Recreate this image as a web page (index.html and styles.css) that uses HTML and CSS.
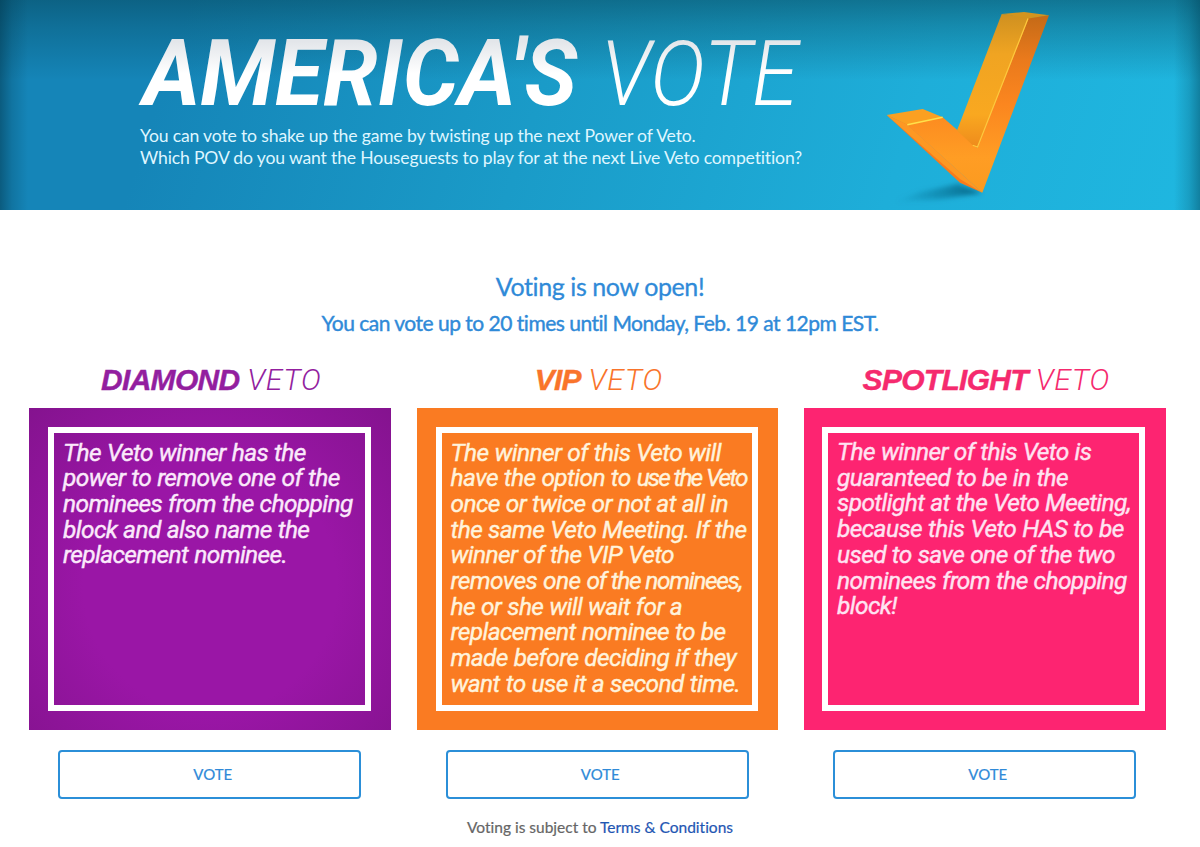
FILE: index.html
```
<!DOCTYPE html>
<html lang="en">

<head>
	<meta charset="UTF-8">
	<title>America's Vote</title>
	<link rel="stylesheet" href="styles.css">
</head>

<body>

	<header class="banner">
		<div class="banner-text">
			<svg class="banner-title" width="670" height="75" viewBox="0 0 670 75" role="heading" aria-level="1">
				<defs>
					<linearGradient id="titleFill" x1="0" y1="0" x2="0" y2="1">
						<stop offset="0.2" stop-color="#e3e6ea"/>
						<stop offset="0.5" stop-color="#ffffff"/>
					</linearGradient>
				</defs>
				<text class="title-bold" x="3" y="70" textLength="434" lengthAdjust="spacingAndGlyphs">AMERICA'S</text>
				<text class="title-thin" x="461" y="70" textLength="197" lengthAdjust="spacingAndGlyphs">VOTE</text>
			</svg>
			<p class="banner-copy">You can vote to shake up the game by twisting up the next Power of Veto.<br>
			Which POV do you want the Houseguests to play for at the next Live Veto competition?</p>
		</div>

		<svg class="check" width="180" height="210" viewBox="0 0 180 210">
			<defs>
				<linearGradient id="inner" x1="0" y1="0" x2="0" y2="1">
					<stop offset="0" stop-color="#cf9020"/>
					<stop offset="0.3" stop-color="#f0a422"/>
					<stop offset="0.75" stop-color="#f9a820"/>
					<stop offset="1" stop-color="#ee8a1c"/>
				</linearGradient>
				<linearGradient id="face" x1="0" y1="0" x2="0" y2="1">
					<stop offset="0" stop-color="#c46a17"/>
					<stop offset="0.25" stop-color="#ea7a1c"/>
					<stop offset="0.5" stop-color="#fb861f"/>
					<stop offset="0.8" stop-color="#ff9d24"/>
					<stop offset="1" stop-color="#fb9a1f"/>
				</linearGradient>
				<linearGradient id="ground" x1="0" y1="0" x2="1" y2="0">
					<stop offset="0" stop-color="#0b6f93" stop-opacity="0"/>
					<stop offset="1" stop-color="#07506e" stop-opacity="0.8"/>
				</linearGradient>
				<filter id="soft" x="-20%" y="-40%" width="140%" height="180%">
					<feGaussianBlur stdDeviation="2.5"/>
				</filter>
			</defs>
			<!-- shadow on the floor -->
			<path d="M14 202 L40 192 L78 184 L102 193 L60 199 Z" fill="url(#ground)" filter="url(#soft)"/>
			<!-- body -->
			<path d="M6.7 115 L27 124 L102.3 192.7 L80 182.7 Z" fill="#f87b1c"/>
			<path d="M148.3 18 L169 15.3 L102.3 192.7 L27 124.5 L62.7 117.3 L77.3 130 L97.3 147.7 Z" fill="url(#face)"/>
			<path d="M121.7 14 L149 17.5 L97.3 147.7 L92.7 145.3 L77 130.5 Z" fill="url(#inner)"/>
			<path d="M6.7 115 L42.7 109 L62.7 117.3 L27.3 124.7 Z" fill="#fba021"/>
			<path d="M121.7 14 L144 12 L169 15.3 L148.5 18.5 Z" fill="#d2941f"/>
			<path d="M6.7 115 L27.3 124.7 L102.3 192.7 L80 179 Z" fill="#ffa126" opacity="0.75"/>
			<!-- lit edges -->
			<path d="M27.3 124.7 L62.7 117.3" stroke="#ffe04a" stroke-width="1.6" fill="none"/>
			<path d="M148 18.5 L97.5 147 L92.7 145.3" stroke="#ffc83c" stroke-width="1.2" fill="none"/>
		</svg>
	</header>

	<main class="content">
		<h2 class="open">Voting is now open!</h2>
		<p class="until">You can vote up to 20 times until Monday, Feb. 19 at 12pm EST.</p>

		<div class="vetoes">
			<section class="veto diamond">
				<h3><b>DIAMOND</b> <i>VETO</i></h3>
				<div class="card">
					<p class="frame">The Veto winner has the<br>
					power to remove one of the<br>
					nominees from the chopping<br>
					block and also name the<br>
					replacement nominee.</p>
				</div>
				<button type="button" class="btn">VOTE</button>
			</section>

			<section class="veto vip">
				<h3><b>VIP</b> <i>VETO</i></h3>
				<div class="card">
					<p class="frame">The winner of this Veto will<br>
					have the option to <span class="tighter">use the Veto</span><br>
					once or twice or not at all in<br>
					the same Veto Meeting. If the<br>
					winner of the VIP Veto<br>
					removes one <span class="tight">of the nominees,</span><br>
					he or she will wait for a<br>
					replacement nominee to be<br>
					made before deciding if they<br>
					want to use it a second time.</p>
				</div>
				<button type="button" class="btn">VOTE</button>
			</section>

			<section class="veto spotlight">
				<h3><b>SPOTLIGHT</b> <i>VETO</i></h3>
				<div class="card">
					<p class="frame">The winner of this Veto is<br>
					guaranteed to be in the<br>
					spotlight at the Veto Meeting,<br>
					because this Veto HAS to be<br>
					used to save one of the two<br>
					nominees from the chopping<br>
					block!</p>
				</div>
				<button type="button" class="btn">VOTE</button>
			</section>
		</div>

		<p class="terms">Voting is subject to <a href="#">Terms &amp; Conditions</a></p>
	</main>

</body>

</html>
```
FILE: styles.css
```
* { box-sizing: border-box; }

body {
	margin: 0;
	background-color: #fff;
	font-family: Lato, "Liberation Sans", sans-serif;
	font-variant-ligatures: none;
}

h2, h3, p { margin: 0; font-weight: normal; }

/* banner */
.banner {
	display: flex;
	height: 210px;
	padding-left: 140px;
	background:
		linear-gradient(to right, rgba(0,50,70,0.5), rgba(0,50,70,0.2) 12px, rgba(0,50,70,0) 28px),
		linear-gradient(to left, rgba(0,60,80,0.45), rgba(0,60,80,0.2) 11px, rgba(0,60,80,0) 26px),
		linear-gradient(to bottom, rgba(5,70,90,0.55), rgba(5,70,90,0.35) 25px, rgba(5,70,90,0) 80px),
		linear-gradient(108deg, #1585b8 15%, #1a9bc8 45%, #1eaed9 75%, #1fb7e0);
}

.banner-text { width: 740px; padding-top: 35px; }

.banner-title { display: block; overflow: visible; }
.banner-title text {
	font-family: Roboto, sans-serif;
	font-size: 91.5px;
	font-style: italic;
	fill: url(#titleFill);
}
.banner-title .title-bold { font-weight: 700; }
.banner-title .title-thin { font-weight: 300; }

.banner-copy {
	margin-top: 15px;
	color: #dff6ff;
	font-size: 17.6px;
	letter-spacing: -0.16px;
	line-height: 21.5px;
	white-space: nowrap;
}

.check { flex: none; }

/* voting */
.content { padding: 60px 34px 0 29px; text-align: center; color: #2f8ad8; }

.open {
	padding-left: 5px;
	font-size: 25px;
	line-height: 32px;
	letter-spacing: -0.4px;
	-webkit-text-stroke: 0.3px;
}

.until {
	padding-left: 5px;
	margin-top: 7px;
	font-size: 21px;
	line-height: 28px;
	letter-spacing: -0.5px;
	-webkit-text-stroke: 0.4px;
}

.vetoes {
	display: grid;
	grid-template-columns: repeat(3, 361.5px);
	column-gap: 26px;
	margin-top: 23px;
}

.veto h3 {
	height: 48px;
	padding-left: 3px;
	line-height: 36px;
	font-size: 30px;
	white-space: nowrap;
}
.veto b {
	font-family: "Liberation Sans", Arial, sans-serif;
	font-style: italic;
	letter-spacing: -0.7px;
	-webkit-text-stroke: 0.4px;
}
.veto i {
	font-family: Roboto, sans-serif;
	font-weight: 300;
	letter-spacing: 0.7px;
}

.card {
	height: 321.5px;
	padding: 19px 20px 19px 19px;
}
.frame {
	height: 283.5px;
	border: 6px solid #fff;
	padding: 6.5px 0 0 9px;
	color: #fbe9fb;
	font-family: Roboto, sans-serif;
	font-style: italic;
	font-size: 24.5px;
	line-height: 25.7px;
	letter-spacing: -0.6px;
	word-spacing: 0.5px;
	text-align: left;
	white-space: nowrap;
	-webkit-text-stroke: 0.4px;
}
.tight { letter-spacing: -1.35px; }
.tighter { letter-spacing: -1.9px; }

.diamond h3 { color: #931f9f; }
.diamond .card { background: radial-gradient(circle at 50% 55%, #9a16a6 50%, #7f1289 112%); }

.vip h3 { color: #f9742b; }
.vip .card { background-color: #fa7b22; }
.vip .frame { color: #fff3dc; }

.spotlight h3 { color: #f52a6e; }
.spotlight .card { background-color: #fd2471; padding: 19px 21px 19px 18px; }
.spotlight .frame { color: #ffe3f2; padding-top: 6px; }

.btn {
	width: 303px;
	height: 49px;
	margin-top: 20px;
	border: 2px solid #2b8fd8;
	border-radius: 4px;
	background-color: #fff;
	color: #2f8ad8;
	font-family: Lato, sans-serif;
	font-size: 15px;
	padding: 0 0 0 6px;
	-webkit-text-stroke: 0.2px;
}

.terms {
	padding-left: 5px;
	margin-top: 17px;
	color: #666;
	font-size: 15.5px;
	line-height: 22px;
	-webkit-text-stroke: 0.2px;
}
.terms a { color: #1f56b3; text-decoration: none; }
```
